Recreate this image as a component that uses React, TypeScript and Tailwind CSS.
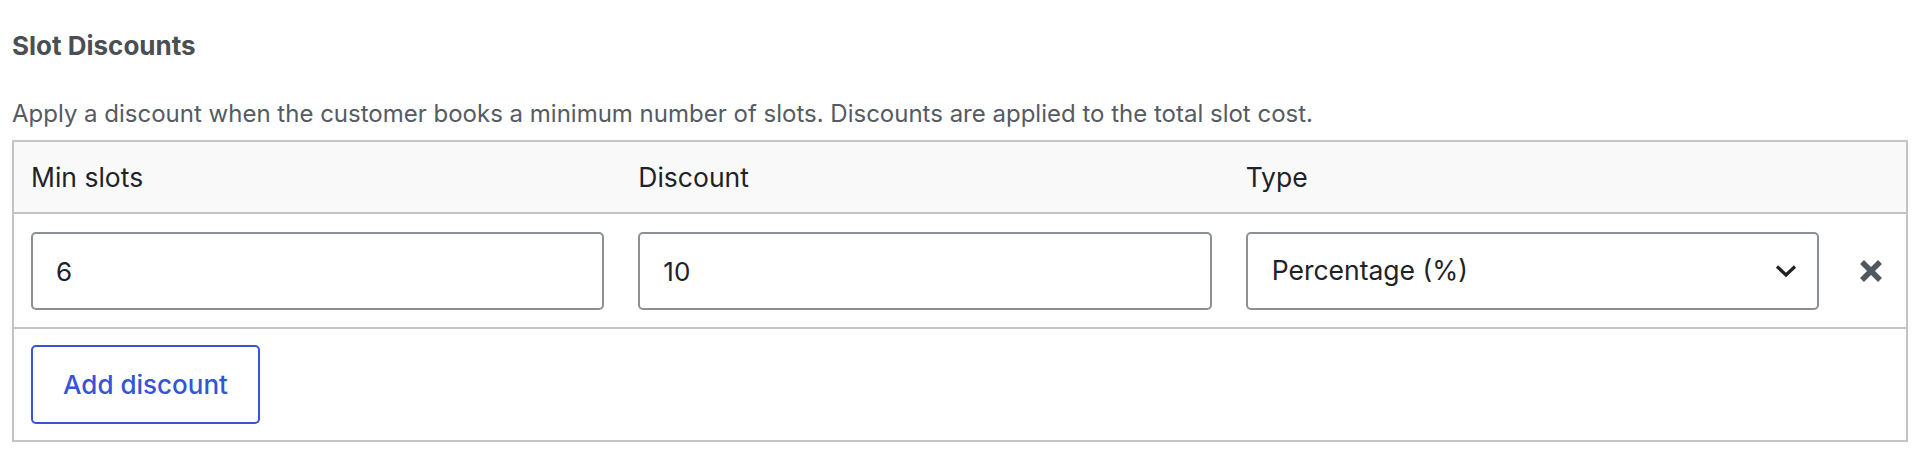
import { useState } from 'react'

const TYPES = [
  { value: 'percent', label: 'Percentage (%)' },
  { value: 'fixed', label: 'Fixed amount' },
]

export default function App() {
  const [rows, setRows] = useState([{ min: '6', amount: '10', type: 'percent' }])

  function update(i: number, key: 'min' | 'amount' | 'type', value: string) {
    setRows((r) => r.map((row, j) => (j === i ? { ...row, [key]: value } : row)))
  }

  return (
    <div className="bg-white px-[12px] font-['Inter',sans-serif]">
      <h2 className="pt-[30px] text-[26px] leading-[32px] font-bold text-[#4a4f55]">
        Slot Discounts
      </h2>
      <p className="mt-[37px] text-[24px] leading-[30px] text-[#555b62]">
        Apply a discount when the customer books a minimum number of slots. Discounts are applied to the total slot cost.
      </p>

      <div className="mt-[11px] border-2 border-[#c3c4c7]">
        {/* Header */}
        <div className="grid grid-cols-[1fr_1fr_1fr_70px] h-[72px] bg-[#f9f9f9] border-b-2 border-[#c3c4c7] text-[26.5px] text-[#1d2327]">
          {['Min slots', 'Discount', 'Type', ''].map((h, i) => (
            <div key={i} className="flex items-center px-[17px] pt-[2px]">
              {h}
            </div>
          ))}
        </div>

        {/* Rows */}
        {rows.map((row, i) => (
          <div
            key={i}
            className="grid grid-cols-[1fr_1fr_1fr_70px] items-center py-[18px] pb-[17px] border-b-2 border-[#c3c4c7]"
          >
            <div className="px-[17px]">
              <input
                type="number"
                value={row.min}
                onChange={(e) => update(i, 'min', e.target.value)}
                className="w-full h-[78px] border-2 border-[#8c8f94] rounded-[5px] pl-[23px] text-[26px] text-[#1d2327] outline-none [appearance:textfield]"
              />
            </div>
            <div className="px-[17px]">
              <input
                type="number"
                value={row.amount}
                onChange={(e) => update(i, 'amount', e.target.value)}
                className="w-full h-[78px] border-2 border-[#8c8f94] rounded-[5px] pl-[23px] text-[26px] text-[#1d2327] outline-none [appearance:textfield]"
              />
            </div>
            <div className="px-[17px]">
              <div className="relative">
                <select
                  value={row.type}
                  onChange={(e) => update(i, 'type', e.target.value)}
                  className="w-full h-[78px] appearance-none bg-white border-2 border-[#8c8f94] rounded-[5px] pl-[24px] text-[26.5px] text-[#1d2327] outline-none"
                >
                  {TYPES.map((t) => (
                    <option key={t.value} value={t.value}>{t.label}</option>
                  ))}
                </select>
                <svg
                  className="absolute right-[22px] top-1/2 -translate-y-1/2 pointer-events-none"
                  width="22" height="13" viewBox="0 0 22 13" fill="none"
                >
                  <path d="M2 2 L11 10.5 L20 2" stroke="#1d2327" strokeWidth="3.2" />
                </svg>
              </div>
            </div>
            <div className="flex justify-center">
              <button
                onClick={() => setRows((r) => r.filter((_, j) => j !== i))}
                className="p-0"
                aria-label="Remove"
              >
                <svg width="24" height="24" viewBox="0 0 24 24">
                  <path d="M3 3 L21 21 M21 3 L3 21" stroke="#50575e" strokeWidth="5.5" />
                </svg>
              </button>
            </div>
          </div>
        ))}

        {/* Footer */}
        <div className="px-[17px] py-[16px]">
          <button
            onClick={() => setRows((r) => [...r, { min: '', amount: '', type: 'percent' }])}
            className="w-[229px] h-[79px] border-2 border-[#3555d6] rounded-[5px] text-[26px] font-medium text-[#3555d6]"
          >
            Add discount
          </button>
        </div>
      </div>
    </div>
  )
}
